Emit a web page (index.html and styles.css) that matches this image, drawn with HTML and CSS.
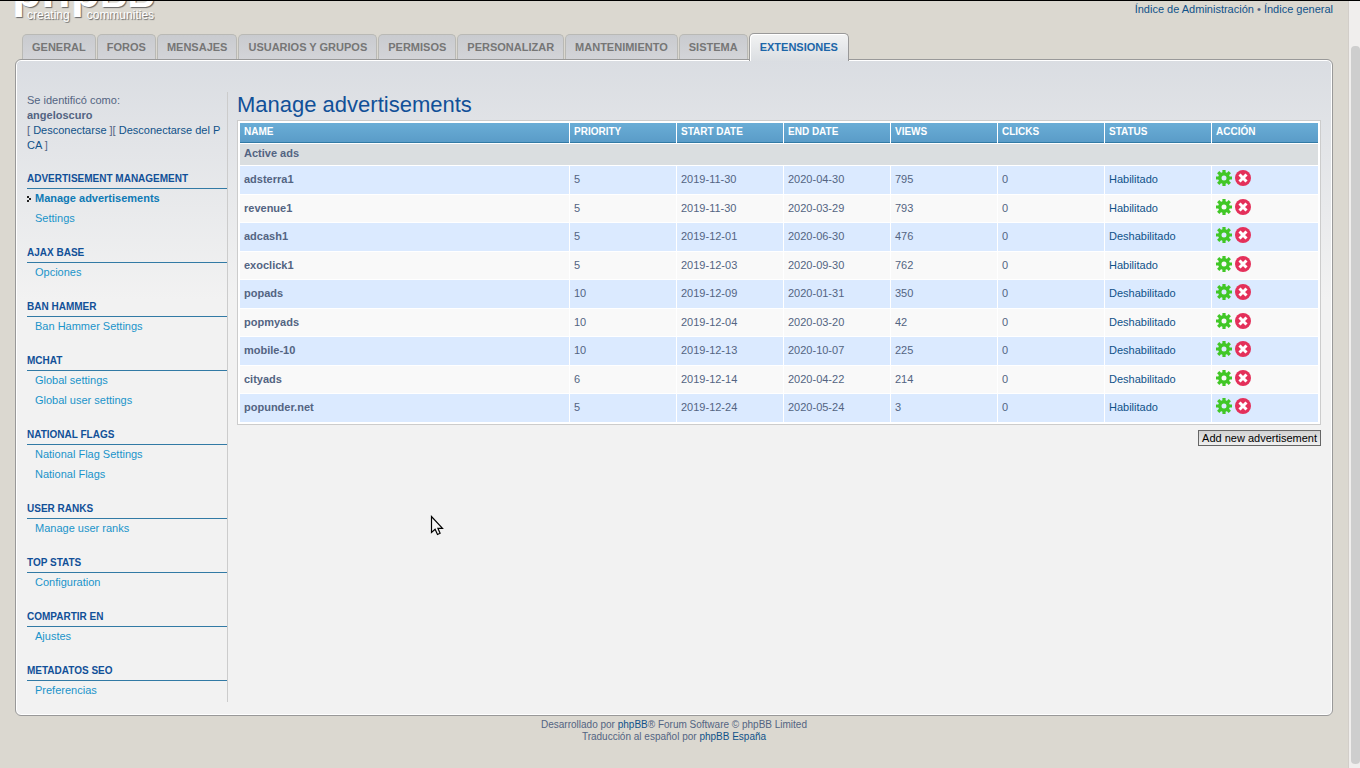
FILE: index.html
```html
<!DOCTYPE html>
<html lang="es">
<head>
    <meta charset="UTF-8">
    <meta name="viewport" content="width=device-width, initial-scale=1.0">
    <title>Manage advertisements</title>
    <link rel="stylesheet" href="styles.css">
</head>
<body>
    <!-- Shared icons -->
    <svg class="sprite" aria-hidden="true">
        <symbol id="icon-gear" viewBox="0 0 16 16">
            <g fill="none" stroke="#41c726">
                <circle cx="8" cy="8" r="4.2" stroke-width="3.4"/>
                <path d="M8 0v4M8 12v4M0 8h4M12 8h4M2.2 2.2l2.9 2.9M10.9 10.9l2.9 2.9M13.8 2.2l-2.9 2.9M5.1 10.9l-2.9 2.9" stroke-width="3.2"/>
            </g>
        </symbol>
        <symbol id="icon-delete" viewBox="0 0 16 16">
            <circle cx="8" cy="8" r="8" fill="#e4305a"/>
            <path d="M4.5 4.5l7 7M11.5 4.5l-7 7" stroke="#fff" stroke-width="3"/>
        </symbol>
    </svg>

    <div class="page">
        <header class="page-header">
            <a href="#" class="logo">
                <span class="logo-name">php<span class="logo-bb">BB</span></span>
                <span class="logo-tag"><span>creating</span><span>communities</span></span>
            </a>
            <p class="skip"><a href="#">Índice de Administración</a> • <a href="#">Índice general</a></p>
        </header>

        <nav class="tabs">
            <a href="#">General</a>
            <a href="#">Foros</a>
            <a href="#">Mensajes</a>
            <a href="#">Usuarios y grupos</a>
            <a href="#">Permisos</a>
            <a href="#">Personalizar</a>
            <a href="#">Mantenimiento</a>
            <a href="#">Sistema</a>
            <a href="#" class="active">Extensiones</a>
        </nav>

        <div class="content">
            <aside class="menu">
                <p class="login">Se identificó como:<br><strong>angeloscuro</strong><br>[ <a href="#">Desconectarse</a> ][ <a href="#">Desconectarse del PCA</a> ]</p>

                <h2>Advertisement management</h2>
                <ul>
                    <li class="active"><a href="#">Manage advertisements</a></li>
                    <li><a href="#">Settings</a></li>
                </ul>
                <h2>Ajax Base</h2>
                <ul>
                    <li><a href="#">Opciones</a></li>
                </ul>
                <h2>Ban Hammer</h2>
                <ul>
                    <li><a href="#">Ban Hammer Settings</a></li>
                </ul>
                <h2>mChat</h2>
                <ul>
                    <li><a href="#">Global settings</a></li>
                    <li><a href="#">Global user settings</a></li>
                </ul>
                <h2>National Flags</h2>
                <ul>
                    <li><a href="#">National Flag Settings</a></li>
                    <li><a href="#">National Flags</a></li>
                </ul>
                <h2>User Ranks</h2>
                <ul>
                    <li><a href="#">Manage user ranks</a></li>
                </ul>
                <h2>Top Stats</h2>
                <ul>
                    <li><a href="#">Configuration</a></li>
                </ul>
                <h2>Compartir en</h2>
                <ul>
                    <li><a href="#">Ajustes</a></li>
                </ul>
                <h2>Metadatos SEO</h2>
                <ul>
                    <li><a href="#">Preferencias</a></li>
                </ul>
            </aside>

            <main class="main">
                <h1>Manage advertisements</h1>
                <table class="ads">
                    <thead>
                        <tr>
                            <th class="name">Name</th>
                            <th>Priority</th>
                            <th>Start date</th>
                            <th>End date</th>
                            <th>Views</th>
                            <th>Clicks</th>
                            <th>Status</th>
                            <th>Acción</th>
                        </tr>
                    </thead>
                    <tbody>
                        <tr class="group"><td colspan="8">Active ads</td></tr>
                    </tbody>
                    <tbody class="rows">
                        <tr>
                            <td>adsterra1</td><td>5</td><td>2019-11-30</td><td>2020-04-30</td><td>795</td><td>0</td>
                            <td><a href="#">Habilitado</a></td>
                            <td><div class="actions"><a href="#" aria-label="Editar"><svg><use href="#icon-gear"/></svg></a><a href="#" aria-label="Borrar"><svg><use href="#icon-delete"/></svg></a></div></td>
                        </tr>
                        <tr>
                            <td>revenue1</td><td>5</td><td>2019-11-30</td><td>2020-03-29</td><td>793</td><td>0</td>
                            <td><a href="#">Habilitado</a></td>
                            <td><div class="actions"><a href="#" aria-label="Editar"><svg><use href="#icon-gear"/></svg></a><a href="#" aria-label="Borrar"><svg><use href="#icon-delete"/></svg></a></div></td>
                        </tr>
                        <tr>
                            <td>adcash1</td><td>5</td><td>2019-12-01</td><td>2020-06-30</td><td>476</td><td>0</td>
                            <td><a href="#">Deshabilitado</a></td>
                            <td><div class="actions"><a href="#" aria-label="Editar"><svg><use href="#icon-gear"/></svg></a><a href="#" aria-label="Borrar"><svg><use href="#icon-delete"/></svg></a></div></td>
                        </tr>
                        <tr>
                            <td>exoclick1</td><td>5</td><td>2019-12-03</td><td>2020-09-30</td><td>762</td><td>0</td>
                            <td><a href="#">Habilitado</a></td>
                            <td><div class="actions"><a href="#" aria-label="Editar"><svg><use href="#icon-gear"/></svg></a><a href="#" aria-label="Borrar"><svg><use href="#icon-delete"/></svg></a></div></td>
                        </tr>
                        <tr>
                            <td>popads</td><td>10</td><td>2019-12-09</td><td>2020-01-31</td><td>350</td><td>0</td>
                            <td><a href="#">Deshabilitado</a></td>
                            <td><div class="actions"><a href="#" aria-label="Editar"><svg><use href="#icon-gear"/></svg></a><a href="#" aria-label="Borrar"><svg><use href="#icon-delete"/></svg></a></div></td>
                        </tr>
                        <tr>
                            <td>popmyads</td><td>10</td><td>2019-12-04</td><td>2020-03-20</td><td>42</td><td>0</td>
                            <td><a href="#">Deshabilitado</a></td>
                            <td><div class="actions"><a href="#" aria-label="Editar"><svg><use href="#icon-gear"/></svg></a><a href="#" aria-label="Borrar"><svg><use href="#icon-delete"/></svg></a></div></td>
                        </tr>
                        <tr>
                            <td>mobile-10</td><td>10</td><td>2019-12-13</td><td>2020-10-07</td><td>225</td><td>0</td>
                            <td><a href="#">Deshabilitado</a></td>
                            <td><div class="actions"><a href="#" aria-label="Editar"><svg><use href="#icon-gear"/></svg></a><a href="#" aria-label="Borrar"><svg><use href="#icon-delete"/></svg></a></div></td>
                        </tr>
                        <tr>
                            <td>cityads</td><td>6</td><td>2019-12-14</td><td>2020-04-22</td><td>214</td><td>0</td>
                            <td><a href="#">Deshabilitado</a></td>
                            <td><div class="actions"><a href="#" aria-label="Editar"><svg><use href="#icon-gear"/></svg></a><a href="#" aria-label="Borrar"><svg><use href="#icon-delete"/></svg></a></div></td>
                        </tr>
                        <tr>
                            <td>popunder.net</td><td>5</td><td>2019-12-24</td><td>2020-05-24</td><td>3</td><td>0</td>
                            <td><a href="#">Habilitado</a></td>
                            <td><div class="actions"><a href="#" aria-label="Editar"><svg><use href="#icon-gear"/></svg></a><a href="#" aria-label="Borrar"><svg><use href="#icon-delete"/></svg></a></div></td>
                        </tr>
                    </tbody>
                </table>
                <div class="quick">
                    <button type="button">Add new advertisement</button>
                </div>
            </main>
        </div>

        <footer class="page-footer">
            Desarrollado por <a href="#">phpBB</a>® Forum Software © phpBB Limited<br>
            Traducción al español por <a href="#">phpBB España</a>
        </footer>
    </div>

    <div class="scrollbar"><div class="thumb"></div></div>

    <svg class="cursor" viewBox="0 0 14 22" aria-hidden="true">
        <path d="M1.5 1.5v16l3.6-3.2 2.4 5.2 2.6-1.2-2.2-5h4.6z" fill="#f4f4f4" stroke="#000" stroke-width="1.2"/>
    </svg>
</body>
</html>
```
FILE: styles.css
```css
* {
    box-sizing: border-box;
}

body {
    margin: 0;
    display: flex;
    min-height: 100vh;
    border-top: 1px solid #000;
    background-color: #dbd8d0;
    color: #536482;
    font-family: "Liberation Sans", Arial, Helvetica, sans-serif;
    font-size: 11px;
    line-height: 15px;
}

h1, h2, p, ul {
    margin: 0;
    padding: 0;
}

ul {
    list-style: none;
}

a {
    color: #105289;
    text-decoration: none;
}

a:hover {
    color: #bc2a4d;
}

.sprite {
    position: absolute;
    width: 0;
    height: 0;
}

.page {
    flex: 1;
    min-width: 0;
    padding: 0 15px;
}

/* Header */
.page-header {
    display: flex;
    justify-content: space-between;
    align-items: flex-start;
    height: 32px;
}

.logo {
    display: flex;
    flex-direction: column;
    justify-content: flex-end;
    height: 22px;
    margin-left: -3px;
    overflow: hidden;
    color: #fff;
    text-shadow: 1px 1px 1px #666;
}

.logo-name {
    margin-bottom: 5px;
    font-size: 48px;
    font-weight: bold;
    line-height: 18px;
}

.logo-bb {
    font-size: 38px;
}

.logo-tag {
    display: flex;
    gap: 17px;
    padding-left: 15px;
    font-size: 12px;
    line-height: 15px;
}

.skip {
    padding-top: 1px;
}

/* Tabs */
.tabs {
    display: flex;
    align-items: flex-end;
    gap: 1px;
    height: 26px;
    padding-left: 7px;
}

.tabs a {
    height: 25px;
    padding: 5px 9px 0;
    border: 1px solid #b9b9b5;
    border-bottom: 0;
    border-radius: 5px 5px 0 0;
    background: linear-gradient(#c9cbcf, #d3d4d8);
    color: #767676;
    font-weight: bold;
    text-transform: uppercase;
}

.tabs .active {
    position: relative;
    height: 28px;
    margin-bottom: -2px;
    padding: 6px 10px 0;
    border-color: #999;
    background: linear-gradient(#f2f3f3, #dbdee2);
    box-shadow: inset 1px 1px #fff;
    color: #1c66a8;
}

/* Content box */
.content {
    display: flex;
    align-items: flex-start;
    gap: 9px;
    padding: 32px 11px 13px 10px;
    border: 1px solid #999;
    border-radius: 6px;
    background: linear-gradient(#dadde2, #f2f2f2 240px);
    box-shadow: inset 0 0 0 1px #fff;
}

.menu {
    width: 202px;
    border-right: 1px solid #ccc;
    padding: 1px 0 1px 1px;
}

.login {
    word-break: break-all;
    margin-bottom: 19px;
}

.menu h2 {
    border-bottom: 1px solid #327aa5;
    color: #115098;
    font-size: 10px;
    line-height: 13px;
    padding: 0 0 3px;
    text-transform: uppercase;
}

.menu ul {
    margin-bottom: 17px;
}

.menu ul:last-child {
    margin-bottom: 0;
}

.menu li a {
    display: block;
    padding: 0 0 2px 8px;
    color: #1a94ca;
    line-height: 18px;
}

/* small dotted arrow before the current item */
.menu .active a {
    background:
        linear-gradient(#222, #222) 0 7px / 2px 2px no-repeat,
        linear-gradient(#222, #222) 2px 9px / 2px 2px no-repeat,
        linear-gradient(#222, #222) 0 11px / 2px 2px no-repeat;
    color: #0e7ab5;
    font-weight: bold;
}

.main {
    flex: 1;
    min-width: 0;
}

h1 {
    color: #115098;
    font-size: 22px;
    font-weight: normal;
    line-height: 26px;
    margin-bottom: 2px;
}

/* Advertisement table */
.ads {
    width: 100%;
    table-layout: fixed;
    border: 1px solid #ccc;
    border-spacing: 1px;
    padding: 1px;
    background-color: #fff;
}

.ads th {
    width: 106px;
    height: 20px;
    padding: 0 4px 3px;
    border-bottom: 1px solid #327aa5;
    background: linear-gradient(#6aadd6, #5a9cc8);
    color: #fff;
    font-size: 10px;
    line-height: 15px;
    text-align: left;
    text-transform: uppercase;
}

.ads .name {
    width: auto;
}

.ads td {
    height: 27px;
    padding: 0 4px;
}

.ads .group td {
    height: 21px;
    padding-bottom: 2px;
    background-color: #dadee0;
    font-weight: bold;
}

.rows tr {
    background-color: #f9f9f9;
}

.rows tr:nth-child(odd) {
    background-color: #dbeaff;
}

.rows tr:nth-child(odd) td {
    height: 28px;
    padding-bottom: 2px;
}

.rows td:first-child {
    font-weight: bold;
}

.actions {
    display: flex;
    gap: 3px;
    padding-bottom: 3px;
}

.actions svg {
    display: block;
    width: 16px;
    height: 16px;
}

.quick {
    display: flex;
    justify-content: flex-end;
    padding-top: 5px;
}

.quick button {
    padding: 0 3px;
    border: 1px solid #666;
    background: linear-gradient(#d2d2d2, #efefef);
    color: #000;
    font: 11px/14px "Liberation Sans", Arial, sans-serif;
    cursor: pointer;
}

/* Footer */
.page-footer {
    padding: 3px 0 24px;
    font-size: 10px;
    line-height: 12px;
    text-align: center;
}

.scrollbar {
    display: flex;
    justify-content: flex-end;
    width: 12px;
    padding: 45px 0 4px;
    border-left: 1px solid #d2cec9;
    background-color: #f0eeed;
}

.thumb {
    width: 9px;
    border-radius: 4px;
    background-color: #cecece;
}

.cursor {
    position: absolute;
    top: 515px;
    left: 430px;
    width: 14px;
    height: 22px;
    pointer-events: none;
}
```
